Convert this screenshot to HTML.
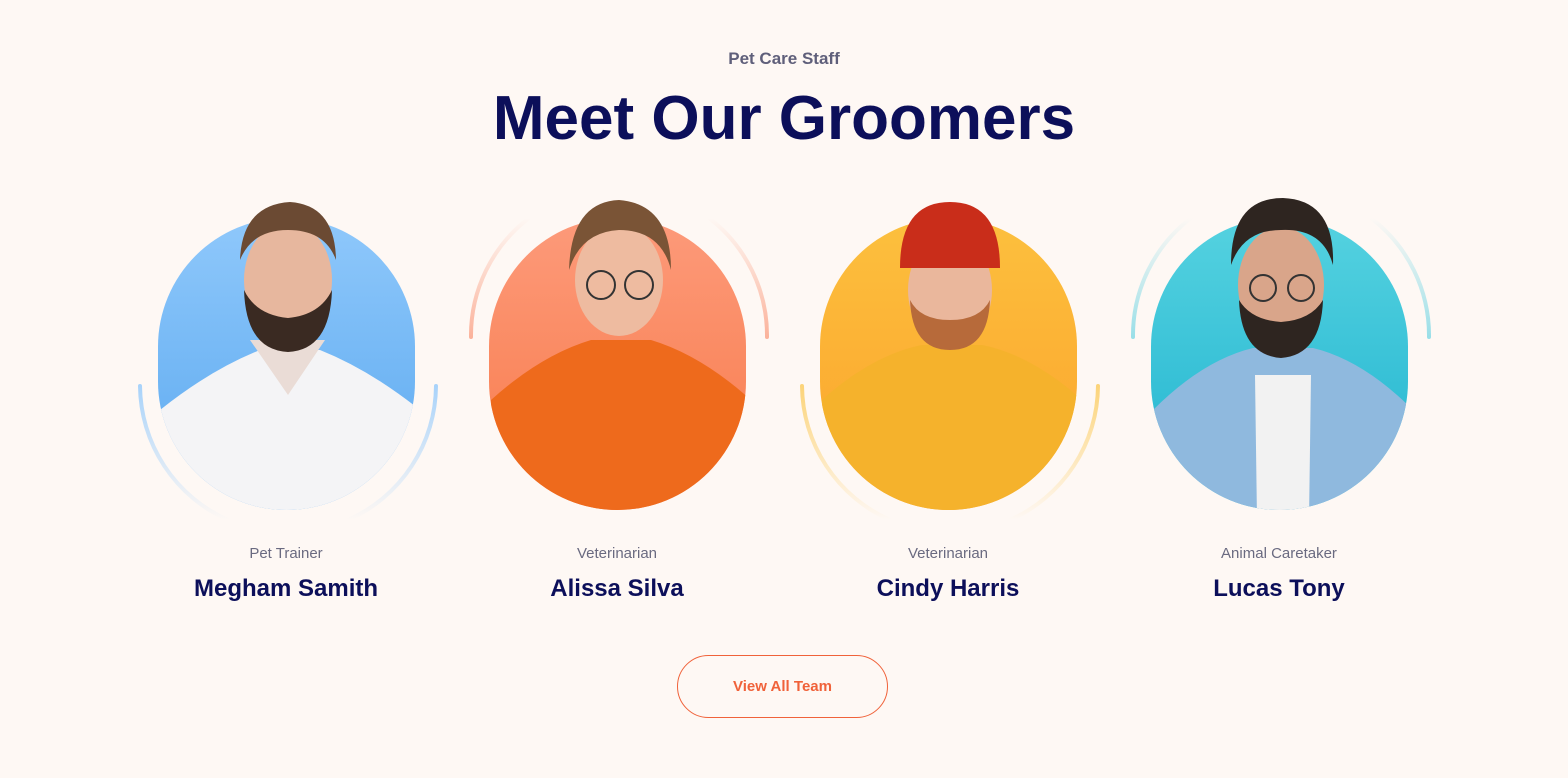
<!DOCTYPE html>
<html><head><meta charset="utf-8"><style>
*{margin:0;padding:0;box-sizing:border-box}
body{width:1568px;height:778px;background:#fef8f4;font-family:"Liberation Sans",sans-serif;position:relative;overflow:hidden}
.sub{position:absolute;top:49px;width:100%;text-align:center;font-size:17px;color:#5f5f7a;font-weight:bold}
h1{position:absolute;top:83px;width:100%;text-align:center;font-size:62px;color:#0c0f5a;font-weight:bold}
.card{position:absolute;top:190px;width:320px;height:330px}
.role{position:absolute;top:545px;width:320px;text-align:center;font-size:15px;color:#6a6a80}
.name{position:absolute;top:575px;width:320px;text-align:center;font-size:24px;color:#0c0f5a;font-weight:bold}
.btn{position:absolute;left:677px;top:655px;width:211px;height:63px;border:1px solid #f0623a;border-radius:32px;color:#f0623a;font-size:15px;font-weight:bold;text-align:center;line-height:61px}
</style></head><body>
<div class="sub">Pet Care Staff</div>
<h1>Meet Our Groomers</h1>

<svg width="0" height="0" style="position:absolute"><defs>
<clipPath id="cp"><rect x="28" y="28" width="257" height="292" rx="128.5"/></clipPath>
<linearGradient id="gb" x1="0" y1="0" x2="0" y2="1"><stop offset="0" stop-color="#8fc8fb"/><stop offset="1" stop-color="#5aa8ef"/></linearGradient>
<linearGradient id="go" x1="0" y1="0" x2="0" y2="1"><stop offset="0" stop-color="#fd9a7a"/><stop offset="1" stop-color="#f77a4a"/></linearGradient>
<linearGradient id="gy" x1="0" y1="0" x2="0" y2="1"><stop offset="0" stop-color="#fcc03e"/><stop offset="1" stop-color="#fba22b"/></linearGradient>
<linearGradient id="gc" x1="0" y1="0" x2="0" y2="1"><stop offset="0" stop-color="#55d2e0"/><stop offset="1" stop-color="#1fb3cf"/></linearGradient>
<linearGradient id="ab" x1="0" y1="0" x2="0" y2="1"><stop offset="0" stop-color="#a9d3fa"/><stop offset="1" stop-color="#a9d3fa" stop-opacity="0"/></linearGradient>
<linearGradient id="ay" x1="0" y1="0" x2="0" y2="1"><stop offset="0" stop-color="#fcd47a"/><stop offset="1" stop-color="#fcd47a" stop-opacity="0"/></linearGradient>
<linearGradient id="ao" x1="0" y1="1" x2="0" y2="0"><stop offset="0" stop-color="#fbb39c"/><stop offset="1" stop-color="#fbb39c" stop-opacity="0"/></linearGradient>
<linearGradient id="ac" x1="0" y1="1" x2="0" y2="0"><stop offset="0" stop-color="#9adfe8"/><stop offset="1" stop-color="#9adfe8" stop-opacity="0"/></linearGradient>
</defs></svg>

<!-- card 1 -->
<svg class="card" style="left:130px" viewBox="0 0 320 330">
<path d="M10 196 A148 148 0 0 0 98 330" stroke="url(#ab)" stroke-width="4" fill="none" stroke-linecap="round"/>
<path d="M306 196 A148 148 0 0 1 218 330" stroke="url(#ab)" stroke-width="4" fill="none" stroke-linecap="round"/>
<g clip-path="url(#cp)"><rect x="28" y="28" width="257" height="292" fill="url(#gb)"/>
<path d="M30 220 Q80 180 130 160 L190 160 Q240 180 290 220 L290 330 L30 330Z" fill="#f4f4f6"/></g>
<path d="M120 150 L158 205 L195 150 Z" fill="#eadcd6"/>
<ellipse cx="158" cy="90" rx="44" ry="58" fill="#e7b79e"/>
<path d="M114 100 Q116 160 158 162 Q200 160 202 100 Q190 125 158 128 Q126 125 114 100Z" fill="#3a2a22"/>
<path d="M110 70 Q112 15 160 12 Q205 15 206 70 Q195 40 158 40 Q122 40 110 70Z" fill="#6b4a33"/>
</svg>

<!-- card 2 -->
<svg class="card" style="left:461px" viewBox="0 0 320 330">
<path d="M10 147 A148 148 0 0 1 68 28" stroke="url(#ao)" stroke-width="4" fill="none" stroke-linecap="round"/>
<path d="M306 147 A148 148 0 0 0 248 28" stroke="url(#ao)" stroke-width="4" fill="none" stroke-linecap="round"/>
<g clip-path="url(#cp)"><rect x="28" y="28" width="257" height="292" fill="url(#go)"/>
<path d="M30 210 Q80 165 130 150 L190 150 Q240 165 290 210 L290 330 L30 330Z" fill="#ee6a1c"/></g>
<ellipse cx="158" cy="90" rx="44" ry="56" fill="#eebba0"/>
<path d="M108 80 Q110 12 158 10 Q210 14 210 80 Q200 40 158 40 Q120 42 108 80Z" fill="#7a5436"/>
<circle cx="140" cy="95" r="14" fill="none" stroke="#333" stroke-width="2"/><circle cx="178" cy="95" r="14" fill="none" stroke="#333" stroke-width="2"/>
</svg>

<!-- card 3 -->
<svg class="card" style="left:792px" viewBox="0 0 320 330">
<path d="M10 196 A148 148 0 0 0 98 330" stroke="url(#ay)" stroke-width="4" fill="none" stroke-linecap="round"/>
<path d="M306 196 A148 148 0 0 1 218 330" stroke="url(#ay)" stroke-width="4" fill="none" stroke-linecap="round"/>
<g clip-path="url(#cp)"><rect x="28" y="28" width="257" height="292" fill="url(#gy)"/>
<path d="M30 210 Q80 165 130 155 L190 155 Q240 165 290 210 L290 330 L30 330Z" fill="#f5b22c"/></g>
<ellipse cx="158" cy="100" rx="42" ry="56" fill="#eab79c"/>
<path d="M118 110 Q120 160 158 160 Q196 160 198 110 Q188 130 158 130 Q128 130 118 110Z" fill="#b76a3a"/>
<path d="M108 78 Q108 12 158 12 Q208 12 208 78 Z" fill="#c92d1a"/>
</svg>

<!-- card 4 -->
<svg class="card" style="left:1123px" viewBox="0 0 320 330">
<path d="M10 147 A148 148 0 0 1 68 28" stroke="url(#ac)" stroke-width="4" fill="none" stroke-linecap="round"/>
<path d="M306 147 A148 148 0 0 0 248 28" stroke="url(#ac)" stroke-width="4" fill="none" stroke-linecap="round"/>
<g clip-path="url(#cp)"><rect x="28" y="28" width="257" height="292" fill="url(#gc)"/>
<path d="M30 220 Q80 170 130 158 L190 158 Q240 170 290 220 L290 330 L30 330Z" fill="#8fb9de"/>
<path d="M132 185 L188 185 L186 330 L134 330Z" fill="#f2f2f2"/></g>
<ellipse cx="158" cy="95" rx="43" ry="58" fill="#d9a58a"/>
<path d="M116 110 Q118 165 158 168 Q198 165 200 110 Q188 130 158 132 Q128 130 116 110Z" fill="#2e2520"/>
<path d="M108 75 Q108 8 160 8 Q212 10 210 75 Q200 38 158 40 Q120 40 108 75Z" fill="#2e2520"/>
<circle cx="140" cy="98" r="13" fill="none" stroke="#333" stroke-width="2"/><circle cx="178" cy="98" r="13" fill="none" stroke="#333" stroke-width="2"/>
</svg>

<div class="role" style="left:126px">Pet Trainer</div><div class="name" style="left:126px">Megham Samith</div>
<div class="role" style="left:457px">Veterinarian</div><div class="name" style="left:457px">Alissa Silva</div>
<div class="role" style="left:788px">Veterinarian</div><div class="name" style="left:788px">Cindy Harris</div>
<div class="role" style="left:1119px">Animal Caretaker</div><div class="name" style="left:1119px">Lucas Tony</div>
<div class="btn">View All Team</div>
</body></html>
